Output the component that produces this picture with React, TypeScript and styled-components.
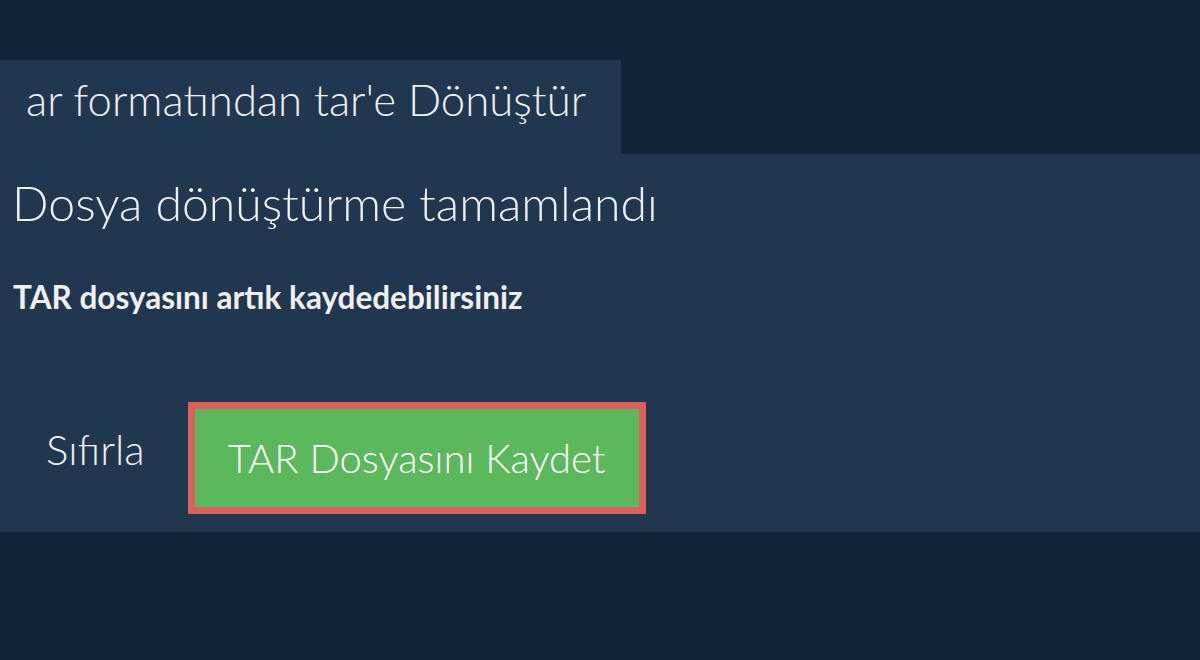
import React from 'react';
import styled, { createGlobalStyle } from 'styled-components';

const GlobalStyle = createGlobalStyle`
  html, body {
    margin: 0;
    padding: 0;
    background: #0f2339;
    font-family: Lato, "Noto Sans", sans-serif;
  }
`;

const Page = styled.div`
  width: 1200px;
  height: 660px;
  padding-top: 60px;
  box-sizing: border-box;
  background: #0f2339;
`;

const Tab = styled.div`
  display: inline-block;
  box-sizing: border-box;
  height: 94px;
  padding: 13px 35px 0 26px;
  background: #213750;
  color: #eef0f3;
  font-size: 43.7px;
  font-weight: 300;
  line-height: 1.2;
  vertical-align: top;
`;

const Panel = styled.div`
  background: #213750;
  height: 378px;
  padding: 20px 12px 0;
  box-sizing: border-box;
  color: #eef0f3;
`;

const Heading = styled.h2`
  margin: 0;
  font-size: 48.2px;
  font-weight: 300;
  line-height: 1.2;
`;

const Sub = styled.p`
  margin: 47px 0 0 1px;
  font-size: 31.5px;
  font-weight: 700;
  line-height: 1.2;
`;

const Actions = styled.div`
  display: flex;
  align-items: center;
  gap: 43px;
  margin-top: 85px;
`;

const ResetButton = styled.button`
  background: none;
  border: none;
  color: #eef0f3;
  font-family: inherit;
  font-size: 42px;
  font-weight: 300;
  line-height: 1.2;
  padding: 0 0 0 34px;
  margin-bottom: 16px;
  cursor: pointer;
`;

const SaveButton = styled.button`
  width: 458px;
  height: 112px;
  box-sizing: border-box;
  padding: 0;
  background: #5cb85c;
  border: 7px solid #dc5f5b;
  color: #ffffff;
  font-family: inherit;
  font-size: 40px;
  font-weight: 300;
  line-height: 1.2;
  cursor: pointer;
`;

export default function App() {
  return (
    <>
      <GlobalStyle />
      <Page>
        <Tab>ar formatından tar'e Dönüştür</Tab>
        <Panel>
          <Heading>Dosya dönüştürme tamamlandı</Heading>
          <Sub>TAR dosyasını artık kaydedebilirsiniz</Sub>
          <Actions>
            <ResetButton>Sıfırla</ResetButton>
            <SaveButton>TAR Dosyasını Kaydet</SaveButton>
          </Actions>
        </Panel>
      </Page>
    </>
  );
}
